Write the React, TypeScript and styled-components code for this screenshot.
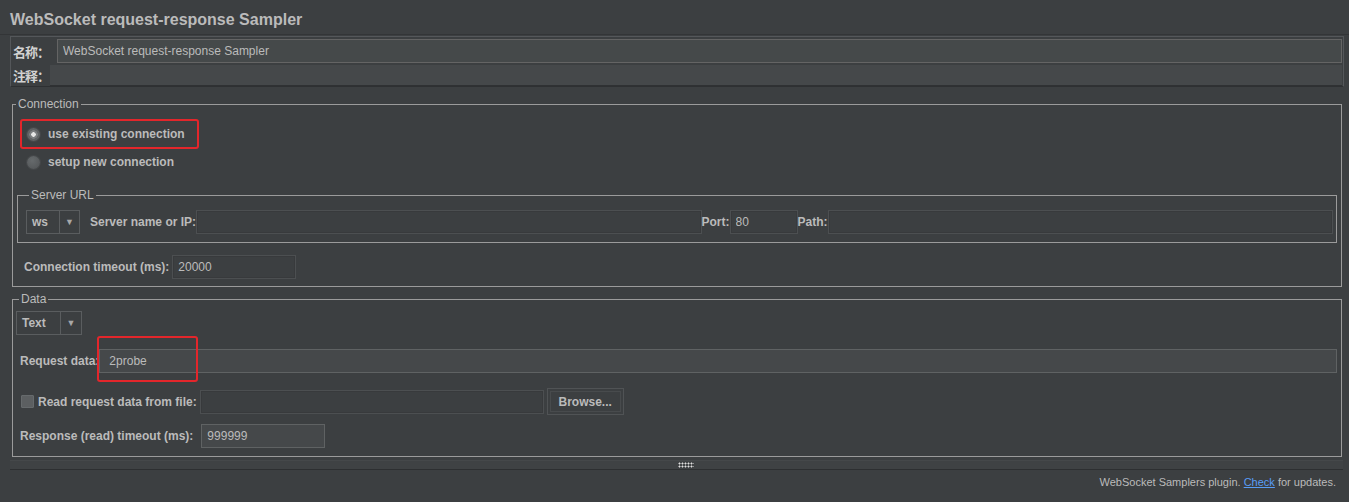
import React from 'react';
import styled, { createGlobalStyle } from 'styled-components';

const GlobalStyle = createGlobalStyle`
  *, *::before, *::after {
    box-sizing: border-box;
  }
  body {
    margin: 0;
    background: #3c3f41;
  }
`;

const Page = styled.div`
  width: 1349px;
  height: 502px;
  overflow: hidden;
  background: #3c3f41;
  color: #bbbbbb;
  font-family: "Liberation Sans", Arial, "Noto Sans CJK SC", sans-serif;
  font-size: 12px;
`;

const Title = styled.h1`
  margin: 0;
  padding: 10px 10px 0;
  height: 35px;
  font-size: 16px;
  line-height: 20px;
  font-weight: bold;
  color: #bbbbbb;
  border-bottom: 1px solid #333537;
`;

const NamePanel = styled.div`
  margin: 1px 5px 0 10px;
  border: 1px solid #54575a;
  border-bottom-color: #2e3032;
`;

const NameRow = styled.div`
  display: flex;
  align-items: center;
  height: 26px;
  padding: 2px 1px 0 1px;
`;

const CommentRow = styled.div`
  display: flex;
  align-items: stretch;
  height: 23px;
  padding: 2px 1px 0 1px;
`;

const CjkLabel = styled.span<{ $w: number }>`
  width: ${(p) => p.$w}px;
  flex: none;
  display: flex;
  align-items: center;
  padding-left: 1px;
  white-space: nowrap;
  font-family: "Noto Sans CJK SC", "Liberation Sans", sans-serif;
  font-weight: bold;
  font-size: 13px;
  letter-spacing: -1px;
  color: #d2d2d2;
`;

const NameField = styled.input`
  flex: 1;
  height: 24px;
  margin: 0;
  padding: 0 0 0 5px;
  background: #45494a;
  border: 1px solid #646464;
  color: #bbbbbb;
  font: 12px "Liberation Sans", Arial, sans-serif;
  outline: none;
`;

const CommentField = styled.div`
  flex: 1;
  background: #45484a;
  border-bottom: 1px solid #2f3133;
`;

const Fieldset = styled.fieldset<{ $m: string; $p: string }>`
  margin: ${(p) => p.$m};
  padding: ${(p) => p.$p};
  border: 1px solid #9b9b9b;
  min-width: 0;
`;

const Legend = styled.legend`
  margin-left: 3px;
  padding: 0 2px;
  font-size: 12px;
  line-height: 14px;
  color: #bbbbbb;
`;

const RadioRow = styled.div`
  display: flex;
  align-items: center;
  height: 28px;
  padding-left: 14px;
`;

const RadioItem = styled.div`
  display: inline-flex;
  align-items: center;
  gap: 8px;
  height: 28px;
`;

const Radio = styled.span<{ $checked?: boolean }>`
  width: 13px;
  height: 13px;
  border-radius: 50%;
  flex: none;
  background: ${(p) =>
    p.$checked
      ? 'radial-gradient(circle, #e6e6e6 0 2px, #7a7d7f 2.5px 4px, #5f6264 4.5px)'
      : 'radial-gradient(circle at 40% 35%, #666a6c, #505355)'};
  box-shadow: 0 0 0 1px #45484a;
`;

const BoldText = styled.span`
  font-weight: bold;
  font-size: 12px;
  color: #bbbbbb;
  white-space: nowrap;
`;

const Highlight = styled.div<{ $inset: string }>`
  position: relative;
  display: inline-flex;

  &::after {
    content: '';
    position: absolute;
    inset: ${(p) => p.$inset};
    border: 2px solid #e3262b;
    border-radius: 3px;
    pointer-events: none;
  }
`;

const Row = styled.div<{ $mt: number; $pl: number; $gap?: number }>`
  display: flex;
  align-items: center;
  margin-top: ${(p) => p.$mt}px;
  padding-left: ${(p) => p.$pl}px;
  gap: ${(p) => p.$gap ?? 0}px;
`;

const Field = styled.input<{ $w?: number; $filled?: boolean; $h?: number }>`
  ${(p) => (p.$w ? `width: ${p.$w}px; flex: none;` : 'flex: 1; min-width: 0;')}
  height: ${(p) => p.$h ?? 24}px;
  margin: 0;
  padding: 0 0 0 5px;
  background: ${(p) => (p.$filled ? '#45484a' : '#3c3f41')};
  border: 1px solid ${(p) => (p.$filled ? '#5f6263' : '#4c4f51')};
  box-shadow: ${(p) => (p.$filled ? 'none' : 'inset 0 0 0 1px #383a3c')};
  color: #bbbbbb;
  font: 12px "Liberation Sans", Arial, sans-serif;
  outline: none;
`;

const FieldWrap = styled.div`
  position: relative;
  flex: 1;
  display: flex;
`;

const Combo = styled.div<{ $w: number; $arrow: number }>`
  display: flex;
  width: ${(p) => p.$w}px;
  height: 24px;
  flex: none;
  border: 1px solid #5a5d5f;
  font-weight: bold;
  color: #bbbbbb;

  & > span:first-child {
    flex: 1;
    display: flex;
    align-items: center;
    padding-left: 5px;
  }

  & > span:last-child {
    width: ${(p) => p.$arrow}px;
    display: flex;
    align-items: center;
    justify-content: center;
    border-left: 1px solid #5a5d5f;
    font-size: 9px;
    color: #a8a8a8;
  }
`;

const Checkbox = styled.span`
  width: 13px;
  height: 13px;
  flex: none;
  margin-right: 1px;
  background: #5c5f61;
  border: 1px solid #666a6c;
  border-radius: 1px;
`;

const Button = styled.button`
  width: 77px;
  height: 27px;
  margin: 0;
  padding: 0;
  background: #3c3f41;
  border: 1px solid #505355;
  box-shadow: inset 0 0 0 2px #3c3f41, inset 0 0 0 3px #484b4d;
  color: #bbbbbb;
  font: bold 12px "Liberation Sans", Arial, sans-serif;
`;

const Divider = styled.div`
  margin: 3px 6px 0 10px;
  height: 10px;
  display: flex;
  align-items: center;
  padding-left: 668px;
  background: #3f4244;
  border-top: 1px solid #45484a;
  border-bottom: 1px solid #2d2f31;
`;

const Grip = styled.span`
  width: 16px;
  height: 6px;
  background-image: radial-gradient(circle, #e0e0e0 0.9px, transparent 1.1px);
  background-size: 3px 3px;
`;

const Footer = styled.div`
  display: flex;
  justify-content: flex-end;
  padding: 1px 13px 0 0;
  height: 23px;
  line-height: 22px;
  font-size: 11px;
  color: #bbbbbb;

  a {
    color: #589df6;
    text-decoration: underline;
  }
`;

export default function App() {
  return (
    <Page>
      <GlobalStyle />
      <Title>WebSocket request-response Sampler</Title>
      <NamePanel>
        <NameRow>
          <CjkLabel $w={45}>名称：</CjkLabel>
          <NameField readOnly defaultValue="WebSocket request-response Sampler" />
        </NameRow>
        <CommentRow>
          <CjkLabel $w={38}>注释：</CjkLabel>
          <CommentField />
        </CommentRow>
      </NamePanel>

      <Fieldset $m="10px 7px 0 12px" $p="9px 0 7px 0">
        <Legend>Connection</Legend>
        <RadioRow>
          <Highlight $inset="-1px -14px -1px -7px">
            <RadioItem>
              <Radio $checked />
              <BoldText>use existing connection</BoldText>
            </RadioItem>
          </Highlight>
        </RadioRow>
        <RadioRow>
          <RadioItem>
            <Radio />
            <BoldText>setup new connection</BoldText>
          </RadioItem>
        </RadioRow>

        <Fieldset $m="12px 4px 0 4px" $p="8px 3px 8px 8px">
          <Legend>Server URL</Legend>
          <Row $mt={0} $pl={0}>
            <Combo $w={54} $arrow={20}>
              <span>ws</span>
              <span>▼</span>
            </Combo>
            <BoldText style={{ marginLeft: 10 }}>Server name or IP:</BoldText>
            <Field readOnly defaultValue="" />
            <BoldText>Port:</BoldText>
            <Field $w={68} readOnly defaultValue="80" />
            <BoldText>Path:</BoldText>
            <Field readOnly defaultValue="" />
          </Row>
        </Fieldset>

        <Row $mt={12} $pl={11} $gap={3}>
          <BoldText>Connection timeout (ms):</BoldText>
          <Field $w={124} readOnly defaultValue="20000" />
        </Row>
      </Fieldset>

      <Fieldset $m="5px 7px 0 12px" $p="5px 4px 8px 3px">
        <Legend>Data</Legend>
        <Combo $w={66} $arrow={21}>
          <span>Text</span>
          <span>▼</span>
        </Combo>
        <Row $mt={14} $pl={4}>
          <BoldText>Request data:</BoldText>
          <FieldWrap>
            <Highlight $inset="-13px -99px -9px -2px" />
            <Field $filled readOnly defaultValue="2probe" style={{ paddingLeft: 9 }} />
          </FieldWrap>
        </Row>
        <Row $mt={15} $pl={5} $gap={3}>
          <Checkbox />
          <BoldText>Read request data from file:</BoldText>
          <Field $w={344} readOnly defaultValue="" />
          <Button>Browse...</Button>
        </Row>
        <Row $mt={9} $pl={4} $gap={8}>
          <BoldText>Response (read) timeout (ms):</BoldText>
          <Field $w={124} $filled readOnly defaultValue="999999" />
        </Row>
      </Fieldset>

      <Divider>
        <Grip />
      </Divider>
      <Footer>
        <span>
          WebSocket Samplers plugin. <a>Check</a> for updates.
        </span>
      </Footer>
    </Page>
  );
}
